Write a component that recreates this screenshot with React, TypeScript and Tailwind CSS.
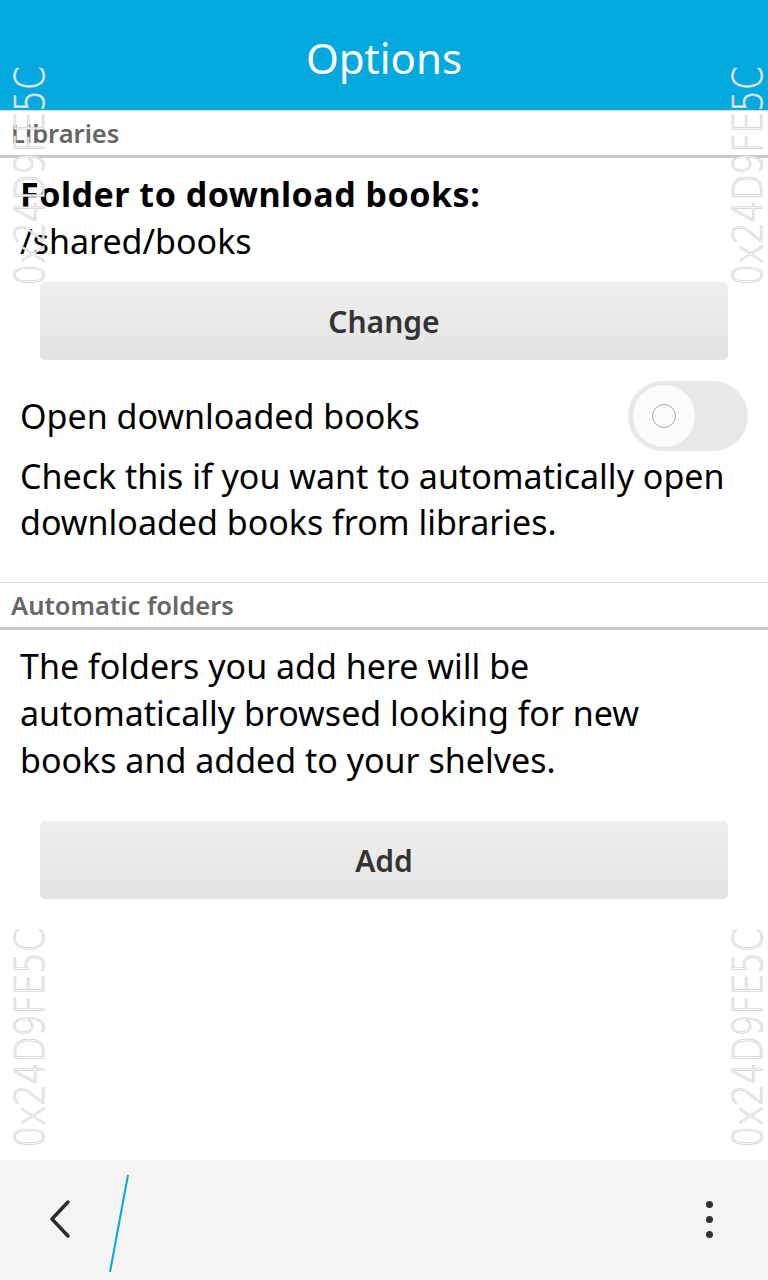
const font = { fontFamily: '"Noto Sans", "Open Sans", sans-serif' }

function Watermark({ className }: { className: string }) {
  return (
    <div
      className={`absolute pointer-events-none flex items-center justify-center w-[32px] h-[220px] ${className}`}
    >
      <span
        className="block -rotate-90 scale-x-[0.85] whitespace-nowrap text-[40px] leading-none font-light text-white/90 [-webkit-text-stroke:0.8px_#d2d2d2]"
        style={{ fontFamily: '"DejaVu Sans", sans-serif' }}
      >
        0x24D9FE5C
      </span>
    </div>
  )
}

function SectionHeader({ label }: { label: string }) {
  return (
    <div className="border-t border-[#dcdcdc] border-b-[3px] border-b-[#c9c9c9] h-[48px] flex items-center px-[11px]">
      <span className="text-[#666] text-[25.5px] font-semibold">{label}</span>
    </div>
  )
}

function GreyButton({ label }: { label: string }) {
  return (
    <div className="mx-[40px] h-[78px] rounded-[5px] bg-gradient-to-b from-[#efefef] to-[#e3e3e3] flex items-center justify-center">
      <span className="text-[#333] text-[30px] font-semibold">{label}</span>
    </div>
  )
}

export default function App() {
  return (
    <div className="relative w-[768px] h-[1280px] bg-white flex flex-col overflow-hidden" style={font}>
      {/* Title bar */}
      <div className="h-[110px] bg-[#02a9df] flex items-center justify-center">
        <span className="text-white text-[42px] pt-[4px]">Options</span>
      </div>

      <div className="flex-1">
        <SectionHeader label="Libraries" />

        <div className="pt-[13px] px-[20px] text-black text-[34px] leading-[47px]">
          <div className="font-bold tracking-[0.5px]">Folder to download books:</div>
          <div>/shared/books</div>
        </div>

        <div className="mt-[17px]">
          <GreyButton label="Change" />
        </div>

        <div className="mt-[21px] pl-[20px] pr-[20px] flex items-center justify-between">
          <span className="text-black text-[34px]">Open downloaded books</span>
          <div className="w-[120px] h-[70px] rounded-full bg-[#e8e8e8] flex items-center pl-[5px]">
            <div className="w-[62px] h-[62px] rounded-full bg-[#fbfbfb] flex items-center justify-center">
              <div className="w-[24px] h-[24px] rounded-full border-[1.5px] border-[#a8a8a8]" />
            </div>
          </div>
        </div>

        <p className="px-[20px] pt-[2px] pb-[37px] text-black text-[34px] leading-[46px]">
          Check this if you want to automatically open downloaded books from libraries.
        </p>

        <SectionHeader label="Automatic folders" />

        <p className="px-[20px] pt-[13px] text-black text-[34px] leading-[47px] max-w-[690px]">
          The folders you add here will be automatically browsed looking for new books and added to your shelves.
        </p>

        <div className="mt-[37px]">
          <GreyButton label="Add" />
        </div>
      </div>

      {/* Action bar */}
      <div className="relative h-[120px] bg-[#f4f4f4] flex items-center justify-between pl-[46px] pr-[40px]">
        <svg width="28" height="40" viewBox="0 0 28 40" className="mb-[2px]">
          <polyline
            points="22,3 6,20 22,37"
            fill="none"
            stroke="#2b2b2b"
            strokeWidth="3.5"
            strokeLinecap="round"
            strokeLinejoin="round"
          />
        </svg>
        <svg className="absolute left-[106px] top-[14px]" width="26" height="100" viewBox="0 0 26 100">
          <line x1="22" y1="1" x2="4" y2="98" stroke="#03a9df" strokeWidth="2" />
        </svg>
        <div className="flex flex-col gap-[8px] mr-[15px] mb-[2px]">
          <span className="w-[7px] h-[7px] rounded-full bg-[#333]" />
          <span className="w-[7px] h-[7px] rounded-full bg-[#333]" />
          <span className="w-[7px] h-[7px] rounded-full bg-[#333]" />
        </div>
      </div>

      <Watermark className="left-[14px] top-[66px]" />
      <Watermark className="left-[732px] top-[66px]" />
      <Watermark className="left-[14px] top-[928px]" />
      <Watermark className="left-[732px] top-[928px]" />
    </div>
  )
}
